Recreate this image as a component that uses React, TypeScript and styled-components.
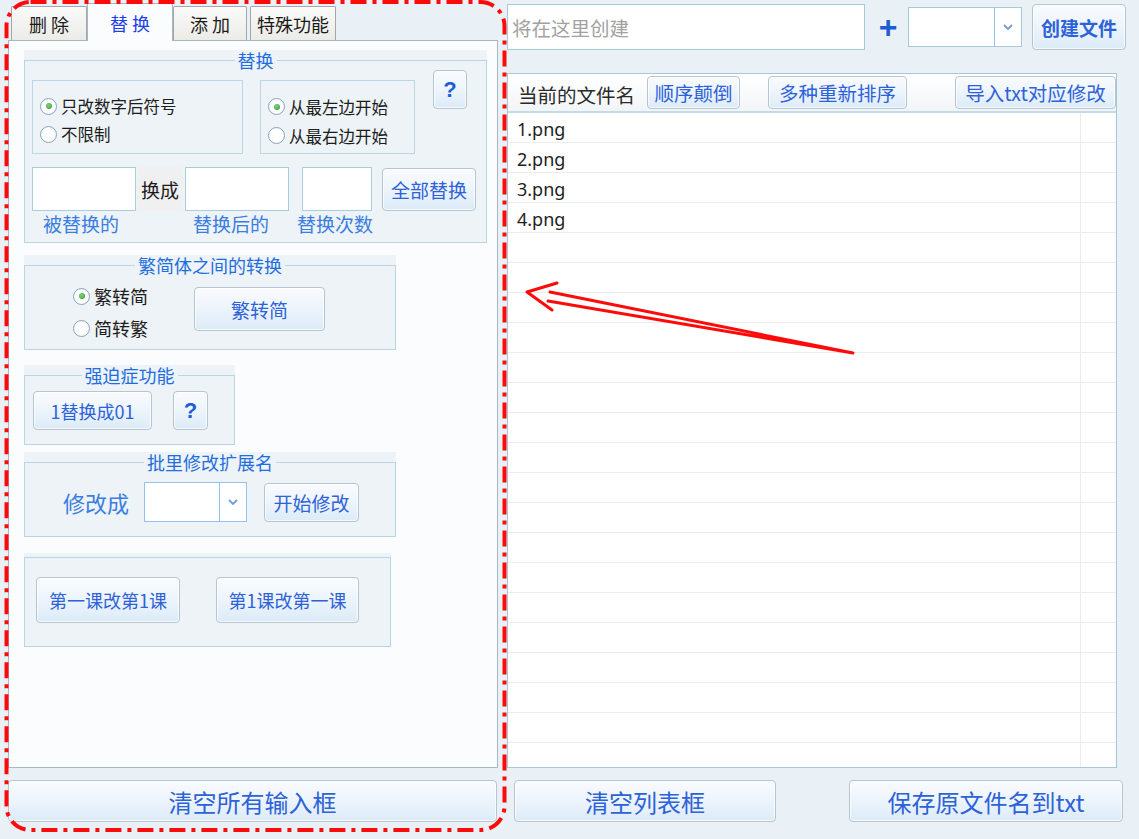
import React from "react";
import styled, { createGlobalStyle } from "styled-components";

const GlobalStyle = createGlobalStyle`
  html, body {
    margin: 0;
    padding: 0;
    background: #e9f1f6;
  }
  body {
    font-family: "Noto Sans CJK SC", "Noto Sans", sans-serif;
  }
`;

const Screen = styled.div`
  position: relative;
  width: 1139px;
  height: 839px;
  box-sizing: border-box;
  padding-left: 8px;
  display: grid;
  grid-template-columns: 490px 619px;
  column-gap: 9px;
  overflow: hidden;
  background: #e9f1f6;
`;

const Column = styled.div<{ $pt: number }>`
  display: flex;
  flex-direction: column;
  align-items: flex-start;
  padding-top: ${(p) => p.$pt}px;
`;

/* ---------- tabs ---------- */

const TabStrip = styled.div`
  display: flex;
  align-items: flex-end;
  height: 37px;
  padding-left: 3px;
`;

const Tab = styled.div<{ $active?: boolean; $w: number; $ml?: number }>`
  position: relative;
  z-index: ${(p) => (p.$active ? 2 : 0)};
  width: ${(p) => p.$w}px;
  height: ${(p) => (p.$active ? 38 : 34)}px;
  margin-left: ${(p) => p.$ml ?? 0}px;
  margin-bottom: ${(p) => (p.$active ? -1 : 0)}px;
  box-sizing: border-box;
  display: flex;
  align-items: center;
  justify-content: center;
  border: 1px solid ${(p) => (p.$active ? "#a9b7c1" : "#a2a7ab")};
  border-bottom: none;
  border-radius: 2px 2px 0 0;
  background: ${(p) =>
    p.$active ? "#fbfcfe" : "linear-gradient(180deg, #fafaf8 0%, #ebebe7 100%)"};
  color: ${(p) => (p.$active ? "#1d3fe8" : "#1a1a1a")};
  font-size: 18px;
  white-space: pre;
`;

const TabPage = styled.div`
  width: 490px;
  height: 728px;
  box-sizing: border-box;
  border: 1px solid #a9b7c1;
  background: #fbfcfe;
  padding: 9px 0 0 15px;
  display: flex;
  flex-direction: column;
  align-items: flex-start;
`;

/* ---------- group boxes ---------- */

const GroupBox = styled.div<{ $w: number; $h: number; $mt?: number; $pt?: number }>`
  width: ${(p) => p.$w}px;
  height: ${(p) => p.$h}px;
  margin-top: ${(p) => p.$mt ?? 0}px;
  padding-top: ${(p) => p.$pt ?? 0}px;
  box-sizing: border-box;
  background: #edf3f6;
  flex-shrink: 0;
`;

const Frame = styled.fieldset`
  margin: 0;
  padding: 0;
  min-width: 0;
  height: 100%;
  box-sizing: border-box;
  border: 1px solid #b9d5e3;
`;

const Legend = styled.legend`
  margin: 0 auto;
  padding: 0 3px;
  font-size: 18px;
  line-height: 20px;
  color: #1f6ee0;
`;

const Row = styled.div<{ $pl?: number; $mt?: number; $align?: string }>`
  display: flex;
  align-items: ${(p) => p.$align ?? "flex-start"};
  padding-left: ${(p) => p.$pl ?? 0}px;
  margin-top: ${(p) => p.$mt ?? 0}px;
`;

const RadioPanel = styled.div<{ $w: number; $ml?: number }>`
  width: ${(p) => p.$w}px;
  height: 74px;
  margin-top: 10px;
  margin-left: ${(p) => p.$ml ?? 0}px;
  box-sizing: border-box;
  border: 1px solid #bcd6e3;
  padding: 11px 0 0 7px;
  flex-shrink: 0;
`;

const RadioStack = styled.div<{ $w: number; $pl: number; $pt: number }>`
  width: ${(p) => p.$w}px;
  box-sizing: border-box;
  padding: ${(p) => p.$pt}px 0 0 ${(p) => p.$pl}px;
  flex-shrink: 0;
`;

const RadioItem = styled.div<{ $h: number; $fs: number }>`
  display: flex;
  align-items: center;
  gap: 4px;
  height: ${(p) => p.$h}px;
  font-size: ${(p) => p.$fs}px;
  color: #1c1c1c;
  white-space: nowrap;
`;

const RadioDot = styled.span<{ $on?: boolean }>`
  width: 15px;
  height: 15px;
  border-radius: 50%;
  border: 1px solid #8ea4bb;
  background: radial-gradient(circle, #ffffff 55%, #e3eaf1 100%);
  display: flex;
  align-items: center;
  justify-content: center;
  flex-shrink: 0;

  &::after {
    content: "";
    display: ${(p) => (p.$on ? "block" : "none")};
    width: 6px;
    height: 6px;
    border-radius: 50%;
    background: radial-gradient(circle at 40% 35%, #7fd37f, #2f9a2f);
  }
`;

const Btn = styled.button<{
  $w: number;
  $h: number;
  $fs?: number;
  $bold?: boolean;
  $ml?: number;
  $mt?: number;
}>`
  width: ${(p) => p.$w}px;
  height: ${(p) => p.$h}px;
  margin: ${(p) => p.$mt ?? 0}px 0 0 ${(p) => p.$ml ?? 0}px;
  padding: 0;
  box-sizing: border-box;
  flex-shrink: 0;
  display: flex;
  align-items: center;
  justify-content: center;
  border: 1px solid #b6c5cf;
  border-radius: 4px;
  background: linear-gradient(180deg, #f9fbfe 0%, #eef5fc 45%, #dcebf8 100%);
  box-shadow: inset 0 0 0 1px rgba(255, 255, 255, 0.7);
  color: #2d62d8;
  font-family: inherit;
  font-size: ${(p) => p.$fs ?? 19}px;
  font-weight: ${(p) => (p.$bold ? 700 : 400)};
  white-space: nowrap;
`;

const TextBox = styled.div<{ $w: number; $h: number; $ml?: number }>`
  width: ${(p) => p.$w}px;
  height: ${(p) => p.$h}px;
  margin-left: ${(p) => p.$ml ?? 0}px;
  box-sizing: border-box;
  border: 1px solid #a9cdd9;
  background: #ffffff;
  flex-shrink: 0;
`;

const JoinLabel = styled.div`
  width: 46px;
  height: 44px;
  margin-left: 1px;
  display: flex;
  align-items: center;
  justify-content: center;
  background: #f0f0f0;
  font-size: 19px;
  color: #1c1c1c;
  flex-shrink: 0;
`;

const Caption = styled.div<{ $w?: number; $ml?: number; $fs?: number }>`
  width: ${(p) => (p.$w ? `${p.$w}px` : "auto")};
  margin-left: ${(p) => p.$ml ?? 0}px;
  font-size: ${(p) => p.$fs ?? 19}px;
  line-height: 24px;
  color: #3a7ee2;
  white-space: nowrap;
  flex-shrink: 0;
`;

const Combo = styled.div<{ $w: number; $h: number; $ml?: number; $edge: string }>`
  display: flex;
  width: ${(p) => p.$w}px;
  height: ${(p) => p.$h}px;
  margin-left: ${(p) => p.$ml ?? 0}px;
  box-sizing: border-box;
  border: 1px solid ${(p) => p.$edge};
  background: #ffffff;
  flex-shrink: 0;
`;

const ComboArrow = styled.div`
  width: 26px;
  margin-left: auto;
  border-left: 1px solid #94c2ef;
  display: flex;
  align-items: center;
  justify-content: center;
`;

const Chevron = () => (
  <svg width="10" height="6" viewBox="0 0 10 6">
    <polyline points="1,1 5,5 9,1" fill="none" stroke="#6f9ed6" strokeWidth="1.8" />
  </svg>
);

const HelpMark = styled.span`
  font-family: "Liberation Sans", sans-serif;
  font-weight: 700;
  font-size: 22px;
  color: #1b5ed8;
`;

/* ---------- right side ---------- */

const TopRow = styled.div`
  display: flex;
  align-items: center;
  height: 46px;
`;

const PathInput = styled.input`
  width: 358px;
  height: 46px;
  box-sizing: border-box;
  border: 1px solid #a6cbd8;
  background: #ffffff;
  padding: 0 0 0 4px;
  font-family: inherit;
  font-size: 19.5px;
  outline: none;

  &::placeholder {
    color: #a2a2a2;
  }
`;

const Plus = styled.span`
  width: 20px;
  margin-left: 13px;
  font-family: "Liberation Sans", sans-serif;
  font-weight: 700;
  font-size: 32px;
  line-height: 32px;
  color: #1c5ed2;
  text-align: center;
`;

const ListView = styled.div`
  width: 610px;
  height: 695px;
  margin-top: 23px;
  box-sizing: border-box;
  border: 1px solid #a6c8d6;
  background: #ffffff;
  overflow: hidden;
  display: flex;
  flex-direction: column;
`;

const ListHeader = styled.div`
  height: 37px;
  flex-shrink: 0;
  display: flex;
  align-items: center;
  background: linear-gradient(180deg, #ffffff 0%, #f2f5f7 100%);
  border-bottom: 2px solid #c4dbe6;
`;

const HeaderTitle = styled.div`
  width: 139px;
  box-sizing: border-box;
  padding: 4px 0 0 10px;
  font-size: 19.5px;
  color: #2a2a2a;
  white-space: nowrap;
  flex-shrink: 0;
  overflow: hidden;
`;

const ListRow = styled.div`
  display: flex;
  height: 30px;
  flex-shrink: 0;
  box-sizing: border-box;
  border-bottom: 1px solid #ececec;
`;

const NameCell = styled.div`
  width: 573px;
  box-sizing: border-box;
  padding: 3px 0 0 9px;
  border-right: 1px solid #ececec;
  font-family: "Noto Sans", sans-serif;
  font-size: 18px;
  line-height: 26px;
  color: #1e1e1e;
`;

const BottomRow = styled.div`
  display: flex;
  margin-top: 12px;
`;

const Overlay = styled.svg`
  position: absolute;
  left: 0;
  top: 0;
  pointer-events: none;
  z-index: 10;
`;

const files = ["1.png", "2.png", "3.png", "4.png"];
const rows = Array.from({ length: 22 }, (_, i) => files[i] ?? "");

export default function App() {
  return (
    <>
      <GlobalStyle />
      <Screen>
        <Column $pt={3}>
          <TabStrip>
            <Tab $w={76}>删 除</Tab>
            <Tab $w={86} $active>
              替 换
            </Tab>
            <Tab $w={74}>添 加</Tab>
            <Tab $w={86} $ml={3}>
              特殊功能
            </Tab>
          </TabStrip>

          <TabPage>
            <GroupBox $w={463} $h={193}>
              <Frame>
                <Legend>替换</Legend>
                <Row $pl={7}>
                  <RadioPanel $w={211}>
                    <RadioItem $h={28} $fs={16.5}>
                      <RadioDot $on />
                      只改数字后符号
                    </RadioItem>
                    <RadioItem $h={28} $fs={16.5}>
                      <RadioDot />
                      不限制
                    </RadioItem>
                  </RadioPanel>
                  <RadioPanel $w={155} $ml={17}>
                    <RadioItem $h={29} $fs={16.5}>
                      <RadioDot $on />
                      从最左边开始
                    </RadioItem>
                    <RadioItem $h={29} $fs={16.5}>
                      <RadioDot />
                      从最右边开始
                    </RadioItem>
                  </RadioPanel>
                  <Btn $w={34} $h={39} $ml={18}>
                    <HelpMark>?</HelpMark>
                  </Btn>
                </Row>
                <Row $pl={7} $mt={13}>
                  <TextBox $w={104} $h={44} />
                  <JoinLabel>换成</JoinLabel>
                  <TextBox $w={104} $h={44} $ml={2} />
                  <TextBox $w={70} $h={44} $ml={13} />
                  <Btn $w={94} $h={43} $ml={10} $mt={1}>
                    全部替换
                  </Btn>
                </Row>
                <Row $pl={18} $mt={1}>
                  <Caption $w={150}>被替换的</Caption>
                  <Caption $w={104}>替换后的</Caption>
                  <Caption>替换次数</Caption>
                </Row>
              </Frame>
            </GroupBox>

            <GroupBox $w={372} $h={95} $mt={12}>
              <Frame>
                <Legend>繁简体之间的转换</Legend>
                <Row>
                  <RadioStack $w={169} $pl={48} $pt={5}>
                    <RadioItem $h={32} $fs={18}>
                      <RadioDot $on />
                      繁转简
                    </RadioItem>
                    <RadioItem $h={32} $fs={18}>
                      <RadioDot />
                      简转繁
                    </RadioItem>
                  </RadioStack>
                  <Btn $w={131} $h={44} $mt={12}>
                    繁转简
                  </Btn>
                </Row>
              </Frame>
            </GroupBox>

            <GroupBox $w={211} $h={80} $mt={15}>
              <Frame>
                <Legend>强迫症功能</Legend>
                <Row $pl={8} $mt={6}>
                  <Btn $w={119} $h={39} $fs={18}>
                    1替换成01
                  </Btn>
                  <Btn $w={35} $h={39} $ml={21}>
                    <HelpMark>?</HelpMark>
                  </Btn>
                </Row>
              </Frame>
            </GroupBox>

            <GroupBox $w={372} $h={85} $mt={7}>
              <Frame>
                <Legend>批里修改扩展名</Legend>
                <Row $pl={38} $mt={10} $align="center">
                  <Caption $w={81} $fs={22}>
                    修改成
                  </Caption>
                  <Combo $w={103} $h={40} $edge="#95c2ee">
                    <ComboArrow>
                      <Chevron />
                    </ComboArrow>
                  </Combo>
                  <Btn $w={95} $h={39} $ml={17}>
                    开始修改
                  </Btn>
                </Row>
              </Frame>
            </GroupBox>

            <GroupBox $w={367} $h={94} $mt={16} $pt={4}>
              <Frame>
                <Row $pl={11} $mt={19}>
                  <Btn $w={144} $h={46} $fs={18}>
                    第一课改第1课
                  </Btn>
                  <Btn $w={143} $h={46} $fs={18} $ml={36}>
                    第1课改第一课
                  </Btn>
                </Row>
              </Frame>
            </GroupBox>
          </TabPage>

          <Btn $w={489} $h={42} $fs={24} $mt={12}>
            清空所有输入框
          </Btn>
        </Column>

        <Column $pt={4}>
          <TopRow>
            <PathInput placeholder="将在这里创建" readOnly />
            <Plus>+</Plus>
            <Combo $w={114} $h={40} $ml={10} $edge="#a6cbd8">
              <ComboArrow>
                <Chevron />
              </ComboArrow>
            </Combo>
            <Btn $w={94} $h={46} $ml={10} $fs={19} $bold>
              创建文件
            </Btn>
          </TopRow>

          <ListView>
            <ListHeader>
              <HeaderTitle>当前的文件名</HeaderTitle>
              <Btn $w={93} $h={33} $fs={19.5}>
                顺序颠倒
              </Btn>
              <Btn $w={139} $h={33} $fs={19.5} $ml={28}>
                多种重新排序
              </Btn>
              <Btn $w={161} $h={33} $fs={19.5} $ml={48}>
                导入txt对应修改
              </Btn>
            </ListHeader>
            {rows.map((name, i) => (
              <ListRow key={i}>
                <NameCell>{name}</NameCell>
              </ListRow>
            ))}
          </ListView>

          <BottomRow>
            <Btn $w={262} $h={42} $fs={24} $ml={7}>
              清空列表框
            </Btn>
            <Btn $w={274} $h={42} $fs={24} $ml={73}>
              保存原文件名到txt
            </Btn>
          </BottomRow>
        </Column>

        <Overlay width="1139" height="839" viewBox="0 0 1139 839">
          <rect
            x="6.5"
            y="2"
            width="498"
            height="828"
            rx="24"
            fill="none"
            stroke="#ff0a0a"
            strokeWidth="4"
            strokeDasharray="16 6 4 6"
          />
          <path
            d="M557 283 L527 292 L552 310 M550 292 L853 353 L548 301"
            fill="none"
            stroke="#ff0a0a"
            strokeWidth="3"
            strokeLinejoin="round"
            strokeLinecap="round"
          />
        </Overlay>
      </Screen>
    </>
  );
}
